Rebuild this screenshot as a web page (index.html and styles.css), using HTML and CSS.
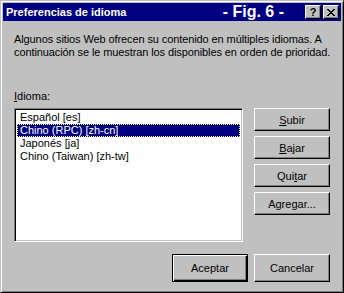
FILE: index.html
```html
<!DOCTYPE html>
<html lang="es">

<head>
    <meta charset="UTF-8">
    <title>Preferencias de idioma</title>
    <link rel="stylesheet" href="styles.css">
</head>

<body>
    <div class="window">
        <div class="titlebar">
            <span class="title">Preferencias de idioma</span>
            <span class="fig">- Fig. 6 -</span>
            <div class="title-btns">
                <span class="tbtn">?</span>
                <span class="tbtn">
                    <svg width="8" height="7" viewBox="0 0 8 7">
                        <path d="M0 0h2v1h1v1h2v-1h1v-1h2v1h-1v1h-1v1h-1v1h1v1h1v1h1v1h-2v-1h-1v-1h-2v1h-1v1h-2v-1h1v-1h1v-1h1v-1h-1v-1h-1v-1h-1z" fill="#000"/>
                    </svg>
                </span>
            </div>
        </div>
        <div class="content">
            <p class="intro">Algunos sitios Web ofrecen su contenido en múltiples idiomas. A<br>continuación se le muestran los disponibles en orden de prioridad.</p>
            <div class="label"><u>I</u>dioma:</div>
            <div class="main-row">
                <div class="listbox">
                    <div class="item">Español [es]</div>
                    <div class="item selected">Chino (RPC) [zh-cn]</div>
                    <div class="item">Japonés [ja]</div>
                    <div class="item">Chino (Taiwan) [zh-tw]</div>
                </div>
                <div class="side">
                    <button class="btn"><u>S</u>ubir</button>
                    <button class="btn"><u>B</u>ajar</button>
                    <button class="btn">Qui<u>t</u>ar</button>
                    <button class="btn">A<u>g</u>regar...</button>
                </div>
            </div>
            <div class="footer">
                <button class="btn big default">Aceptar</button>
                <button class="btn big">Cancelar</button>
            </div>
        </div>
    </div>
</body>

</html>
```

FILE: styles.css
```css
* {
    box-sizing: border-box;
}

body {
    margin: 0;
    background: #c0c0c0;
    font-family: "Liberation Sans", Arial, sans-serif;
    font-size: 11px;
    color: #000;
}

.window {
    width: 344px;
    height: 293px;
    background: #c0c0c0;
    border: 1px solid;
    border-color: #c0c0c0 #000 #000 #c0c0c0;
    box-shadow: inset 1px 1px #fff, inset -1px -1px #808080;
    padding: 2px;
    display: flex;
    flex-direction: column;
}

.titlebar {
    height: 18px;
    background: #000080;
    color: #fff;
    display: flex;
    align-items: center;
    padding: 0 2px 0 3px;
}

.title {
    font-weight: bold;
    font-size: 11px;
}

.fig {
    font-weight: bold;
    font-size: 16px;
    margin-left: auto;
    margin-right: 21px;
}

.title-btns {
    display: flex;
    gap: 2px;
}

.tbtn {
    width: 16px;
    height: 14px;
    background: #c0c0c0;
    color: #000;
    font-weight: bold;
    font-size: 11px;
    display: flex;
    align-items: center;
    justify-content: center;
    border: 1px solid;
    border-color: #fff #000 #000 #fff;
    box-shadow: inset -1px -1px #808080;
}

.content {
    flex: 1;
    padding: 12px 11px 8px 11px;
    display: flex;
    flex-direction: column;
}

.intro {
    margin: 0;
    line-height: 13px;
    white-space: nowrap;
    letter-spacing: -0.1px;
}

.label {
    margin-top: 31px;
    line-height: 13px;
}

.main-row {
    margin-top: 5px;
    display: flex;
    justify-content: space-between;
}

.listbox {
    width: 229px;
    height: 134px;
    background: #fff;
    border: 1px solid;
    border-color: #808080 #fff #fff #808080;
    box-shadow: inset 1px 1px #000, inset -1px -1px #c0c0c0;
    padding: 2px 2px;
}

.item {
    height: 13px;
    line-height: 11px;
    padding: 0 2px;
    border: 1px solid transparent;
}

.item.selected {
    background: #000080;
    color: #fff;
    border: 1px dotted #ffff80;
}

.side {
    display: flex;
    flex-direction: column;
    gap: 5px;
}

.btn {
    width: 76px;
    height: 23px;
    background: #c0c0c0;
    font-family: "Liberation Sans", Arial, sans-serif;
    font-size: 11px;
    color: #000;
    padding: 0;
    border: 1px solid;
    border-color: #fff #000 #000 #fff;
    box-shadow: inset -1px -1px #808080;
}

.footer {
    margin-top: auto;
    display: flex;
    justify-content: flex-end;
    gap: 6px;
}

.btn.big {
    height: 28px;
}

.btn.default {
    border: 1px solid #000;
    box-shadow: inset 1px 1px #fff, inset -1px -1px #000, inset -2px -2px #808080;
}
```
